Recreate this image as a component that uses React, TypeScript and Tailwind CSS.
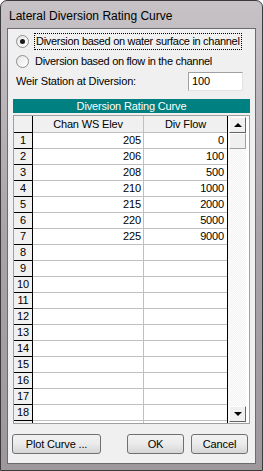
import React from 'react';

const rows: { elev: string; flow: string }[] = [
  { elev: '205', flow: '0' },
  { elev: '206', flow: '100' },
  { elev: '208', flow: '500' },
  { elev: '210', flow: '1000' },
  { elev: '215', flow: '2000' },
  { elev: '220', flow: '5000' },
  { elev: '225', flow: '9000' },
];

const Radio = ({ checked }: { checked?: boolean }) => (
  <div className="w-[13px] h-[13px] rounded-full border border-[#8f8f8f] bg-gradient-to-br from-[#e6e6e6] to-white flex items-center justify-center shrink-0">
    {checked && <div className="w-[5px] h-[5px] rounded-full bg-[#1a1a1a]" />}
  </div>
);

const WinButton = ({ label, className }: { label: string; className: string }) => (
  <button
    className={`h-[20px] rounded-[3px] border border-[#707070] bg-gradient-to-b from-[#f2f2f2] via-[#ebebeb] to-[#d5d5d5] text-[11px] text-black ${className}`}
  >
    {label}
  </button>
);

export default function App() {
  const allRows = Array.from({ length: 19 }, (_, i) => rows[i] ?? { elev: '', flow: '' });

  return (
    <div
      className="w-[263px] h-[471px] flex flex-col rounded-t-[7px] border border-[#3c3a3c] bg-gradient-to-b from-[#c7c2c6] via-[#aaa4a9] to-[#9e989d] overflow-hidden"
      style={{ fontFamily: '"Liberation Sans", Arial, sans-serif' }}
    >
      {/* Title bar */}
      <div className="h-[27px] pl-[8px] pt-[2px] flex items-center text-[12px] text-black shrink-0">
        Lateral Diversion Rating Curve
      </div>

      {/* Client area */}
      <div className="mx-[6px] mb-[6px] flex-1 border border-[#6e6b6e] bg-[#f0f0f0] flex flex-col text-[11px] text-black tracking-[-0.15px]">
        {/* Options */}
        <div className="pt-[3px] flex flex-col">
          <div className="flex items-center h-[18px] pl-[8px] gap-[5px]">
            <Radio checked />
            <span className="border border-dotted border-black px-[1px] leading-[15px] whitespace-nowrap tracking-[-0.3px]">
              Diversion based on water surface in channel
            </span>
          </div>
          <div className="flex items-center h-[18px] mt-[2px] pl-[8px] gap-[6px]">
            <Radio />
            <span className="whitespace-nowrap tracking-[-0.3px]">Diversion based on flow in the channel</span>
          </div>
          <div className="flex items-center justify-between h-[20px] mt-[1px] pl-[8px] pr-[12px]">
            <span>Weir Station at Diversion:</span>
            <div className="w-[55px] h-[19px] border border-t-[#a0a0a0] border-l-[#a0a0a0] border-b-[#e3e3e3] border-r-[#e3e3e3] bg-white pl-[3px] flex items-center">
              100
            </div>
          </div>
        </div>

        {/* Table caption */}
        <div className="mt-[8px] mx-[5px] h-[14px] bg-[#008080] text-white text-center leading-[14px]">
          Diversion Rating Curve
        </div>

        {/* Grid */}
        <div className="mt-[2px] mx-[5px] h-[309px] border border-[#a0a0a0] bg-white flex overflow-hidden">
          <div className="flex flex-col w-[213px] shrink-0 overflow-hidden">
            {/* header */}
            <div className="flex h-[17px] shrink-0">
              <div className="w-[19px] bg-[#f0f0f0] border-r border-b border-black" />
              <div className="w-[111px] bg-[#f0f0f0] border-r border-b border-[#c0c0c0] text-center leading-[16px]">
                Chan WS Elev
              </div>
              <div className="w-[83px] bg-[#f0f0f0] border-b border-[#c0c0c0] text-center leading-[16px]">
                Div Flow
              </div>
            </div>
            {allRows.map((r, i) => (
              <div key={i} className="flex h-[16px] shrink-0">
                <div className="w-[19px] bg-[#f0f0f0] border-r border-b border-black text-center leading-[15px]">
                  {i < 18 ? i + 1 : ''}
                </div>
                <div className="w-[111px] border-r border-b border-[#c0c0c0] text-right pr-[2px] leading-[15px]">
                  {r.elev}
                </div>
                <div className="w-[83px] border-b border-[#c0c0c0] text-right pr-[3px] leading-[15px]">
                  {r.flow}
                </div>
              </div>
            ))}
          </div>
          {/* scrollbar */}
          <div className="w-[19px] border-l border-black flex flex-col pl-[1px] pt-[1px] bg-[repeating-conic-gradient(#f4f4f4_0%_25%,#fcfcfc_0%_50%)] bg-[length:2px_2px]">
            <div className="w-[17px] h-[16px] border border-t-white border-l-white border-r-[#646464] border-b-[#646464] bg-[#f0f0f0] flex items-center justify-center">
              <div className="w-0 h-0 border-l-[4px] border-r-[4px] border-b-[4px] border-l-transparent border-r-transparent border-b-black" />
            </div>
            <div className="w-[17px] h-[16px] border border-t-white border-l-white border-r-[#a0a0a0] border-b-[#a0a0a0] bg-[#f0f0f0]" />
            <div className="flex-1" />
            <div className="w-[17px] h-[16px] mb-[1px] border border-t-white border-l-white border-r-[#646464] border-b-[#646464] bg-[#f0f0f0] flex items-center justify-center">
              <div className="w-0 h-0 border-l-[4px] border-r-[4px] border-t-[4px] border-l-transparent border-r-transparent border-t-black" />
            </div>
          </div>
        </div>

        {/* Buttons */}
        <div className="mt-[10px] flex items-center pl-[4px] pr-[7px]">
          <WinButton label="Plot Curve ..." className="w-[89px]" />
          <div className="flex-1" />
          <WinButton label="OK" className="w-[57px]" />
          <WinButton label="Cancel" className="w-[57px] ml-[7px]" />
        </div>
      </div>
    </div>
  );
}
